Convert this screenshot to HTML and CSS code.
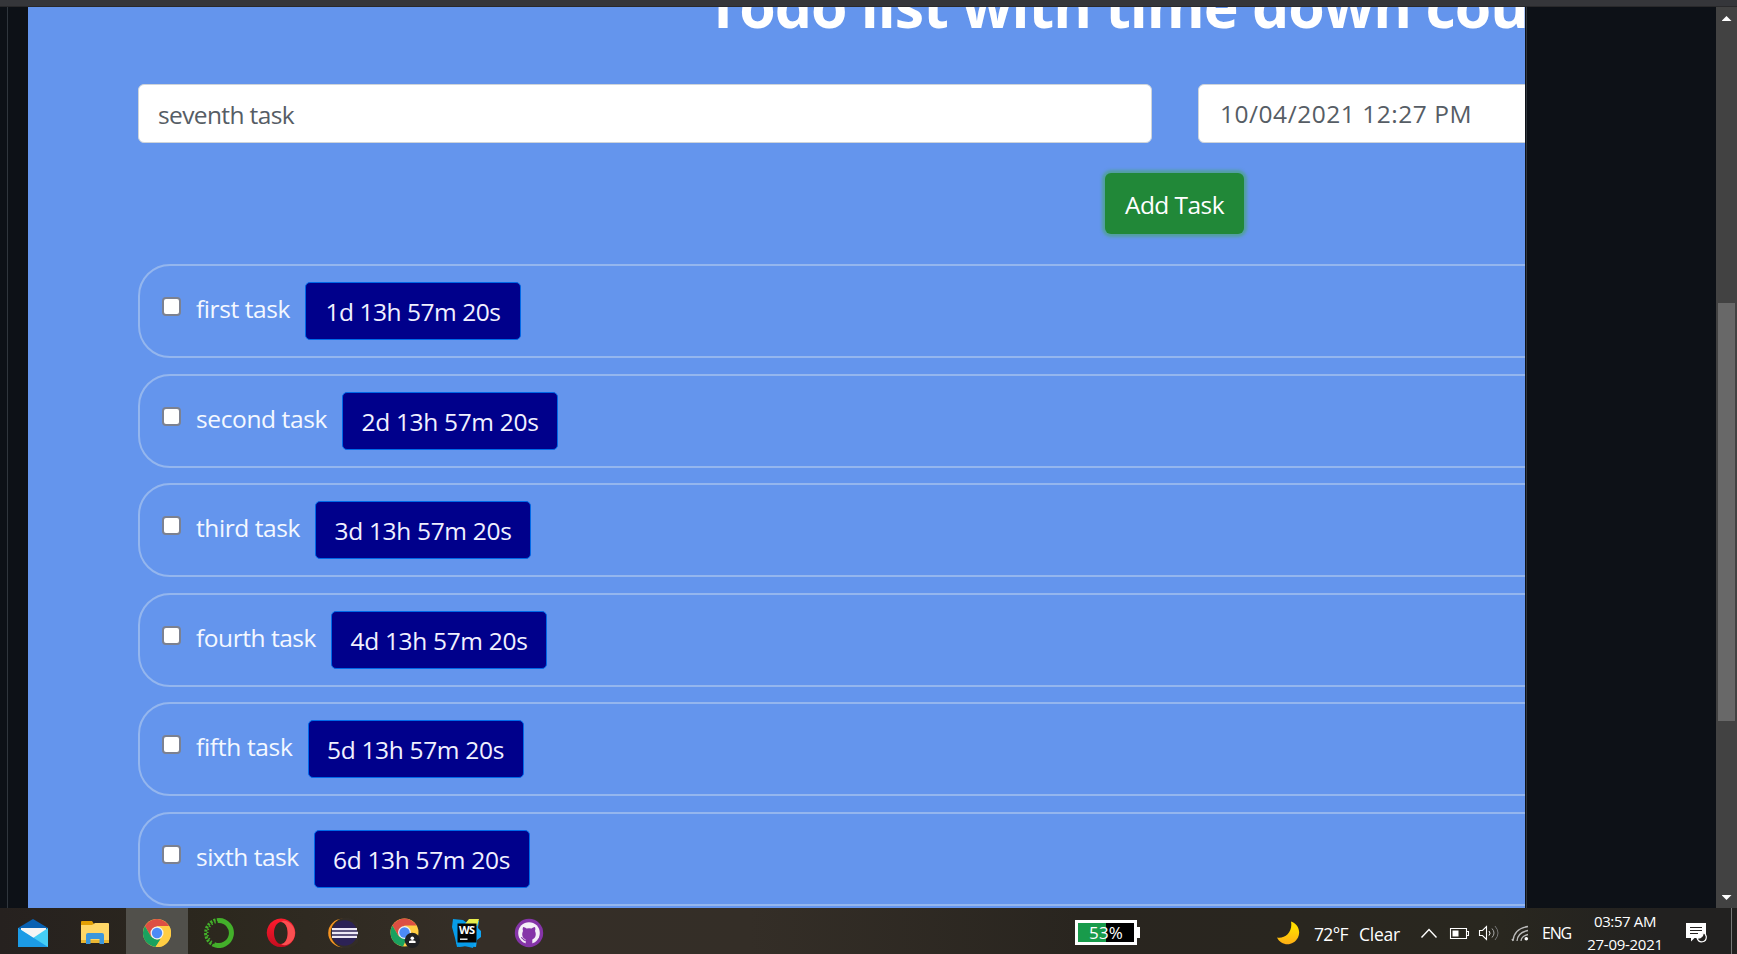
FILE: index.html
```html
<!DOCTYPE html>
<html lang="en">
<head>
<meta charset="utf-8">
<title>Todo list</title>
<link rel="stylesheet" href="styles.css">
</head>
<body>
<div class="browser-edge"></div>
<main class="viewport">
  <div class="gutter"></div>
  <section class="todo">
    <h1 class="title"><span data-fit="822">Todo list with time down cou</span></h1>
    <div class="inputs">
      <div class="field name"><span data-fit="136">seventh task</span></div>
      <div class="field date"><span data-fit="252">10/04/2021 12:27 PM</span></div>
    </div>
    <button class="add"><span data-fit="99">Add Task</span></button>
    <ul class="tasks">
      <li class="task"><i class="check"></i><span class="label" data-fit="94">first task</span><span class="timer"><span data-fit="175">1d 13h 57m 20s</span></span></li>
      <li class="task"><i class="check"></i><span class="label" data-fit="131">second task</span><span class="timer"><span data-fit="177">2d 13h 57m 20s</span></span></li>
      <li class="task"><i class="check"></i><span class="label" data-fit="104">third task</span><span class="timer"><span data-fit="177">3d 13h 57m 20s</span></span></li>
      <li class="task"><i class="check"></i><span class="label" data-fit="120">fourth task</span><span class="timer"><span data-fit="177">4d 13h 57m 20s</span></span></li>
      <li class="task"><i class="check"></i><span class="label" data-fit="96.5">fifth task</span><span class="timer"><span data-fit="177">5d 13h 57m 20s</span></span></li>
      <li class="task"><i class="check"></i><span class="label" data-fit="102.5">sixth task</span><span class="timer"><span data-fit="177">6d 13h 57m 20s</span></span></li>
    </ul>
  </section>
  <div class="side"></div>
  <div class="scrollbar"><i class="arrow up"></i><i class="thumb"></i><i class="arrow down"></i></div>
</main>
<footer class="taskbar">
  <div class="apps">
    <div class="app"><svg width="30" height="30" viewBox="0 0 30 30"><path d="M0 10 15 1 30 10V20H0Z" fill="#0861b3"/><path d="M3 10H28V20H3Z" fill="#f5f5f5"/><path d="M0 10 15 20 30 10V29H0Z" fill="#45cdf5"/><path d="M0 10 30 29H0Z" fill="#1c9be6"/></svg></div>
    <div class="app"><svg width="30" height="30" viewBox="0 0 30 30"><path d="M1 4a1 1 0 0 1 1-1h10l2 3-2 2H1Z" fill="#e2a004"/><path d="M1 7h11l3-2h13a1 1 0 0 1 1 1v19H1Z" fill="#ffd767"/><path d="M1 22h28v3H1Z" fill="#eab632"/><path d="M6 26V17q0-2 2-2h14q2 0 2 2v9h-4.500v-5h-9v5Z" fill="#3b97dd"/></svg></div>
    <div class="app active"><svg width="28" height="28" viewBox="0 0 28 28"><circle cx="14" cy="14" r="14" fill="#ffcd43"/><path d="M1.900 7A14 14 0 0 1 26.100 7H14L8 17.500Z" fill="#dd4f43"/><path d="M1.900 7 8 17.500 14 20.500 18 20 12.500 28A14 14 0 0 1 1.900 7Z" fill="#1aa15f"/><path d="M14 7H26.100A14 14 0 0 1 12.500 28L19.500 17Z" fill="#ffcd43"/><circle cx="14" cy="14" r="6.500" fill="#f1f1f1"/><circle cx="14" cy="14" r="5.200" fill="#4c8bf5"/></svg></div>
    <div class="app"><svg width="30" height="30" viewBox="0 0 30 30" fill="none"><path d="M15 2.500A12.500 12.500 0 1 1 10 26.500" stroke="#43b02a" stroke-width="5"/><path d="M15 1.500A13.500 13.500 0 0 0 10 27.500" stroke="#43b02a" stroke-width="3" stroke-dasharray="2.200 1.300"/><path d="M15 4A11 11 0 0 0 9 24.500" stroke="#43b02a" stroke-width="2" stroke-dasharray="1.300 2"/></svg></div>
    <div class="app"><svg width="30" height="30" viewBox="0 0 30 30"><defs><linearGradient id="op" x1="0" x2="0" y1="0" y2="1"><stop offset="0" stop-color="#ff1b2d"/><stop offset="1" stop-color="#c40d1f"/></linearGradient></defs><path fill="url(#op)" fill-rule="evenodd" d="M15 .5a14.300 14.300 0 1 0 .1 0ZM15 4c4 0 6.700 5 6.700 11S19 26 15 26 8 21 8 15 11 4 15 4Z"/><path d="M15 4C19 0 29 6 29 15S20 30 15 26C24 26 24 4 15 4Z" fill="#fa4f51"/></svg></div>
    <div class="app"><svg width="30" height="30" viewBox="0 0 30 30"><circle cx="14.500" cy="15" r="14.300" fill="#f79421"/><circle cx="18" cy="15" r="15.300" fill="#332d26"/><circle cx="16.500" cy="15" r="12.800" fill="#2c2255"/><path d="M4 11.200h25M4 15h26M4 18.800h25" stroke="#eee9f5" stroke-width="2.300"/></svg></div>
    <div class="app"><svg width="30" height="30" viewBox="0 0 30 30"><circle cx="14.500" cy="14.500" r="14" fill="#ffcd43"/><path d="M2.400 7.500A14 14 0 0 1 26.600 7.500H14.500L8.500 18Z" fill="#dd4f43"/><path d="M2.400 7.500 8.500 18l8 3L13 28.500A14 14 0 0 1 2.400 7.500Z" fill="#1aa15f"/><circle cx="14.500" cy="14.500" r="6.500" fill="#f1f1f1"/><circle cx="14.500" cy="14.500" r="5.200" fill="#4c8bf5"/><circle cx="22.300" cy="22.300" r="7.600" fill="#202124"/><circle cx="22.300" cy="20.300" r="1.800" fill="#fff"/><path d="M19 25v-1.300q0-1.500 3.300-1.500t3.300 1.500V25Z" fill="#fff"/></svg></div>
    <div class="app"><svg width="30" height="30" viewBox="0 0 30 30"><path d="M1 1 11 2 15 5V28L5 29 3 20 0 9Z" fill="#079ce9"/><path d="M13 5 19 1 27 3 26 10 29 13V19L25 22 24 29 12 28Z" fill="#10a5f4"/><path d="M13 6 17 1 27 1 25 8Z" fill="#e8ee4c"/><path d="M4 25h18l-1 5-8-2-6 1Z" fill="#079ce9"/><rect x="5.500" y="5.500" width="19" height="19" fill="#050505"/><text class="ws" x="7" y="15.500" textLength="16">WS</text><path d="M8 21.200h7.500" stroke="#fff" stroke-width="1.400"/></svg></div>
    <div class="app"><svg width="30" height="30" viewBox="0 0 30 30"><circle cx="15" cy="15" r="14.200" fill="#8534a8"/><circle cx="15" cy="15" r="10.800" fill="#f4eff7"/><path d="M11.700 26v-4.500C8 20 7.500 16 9 13q-.8-2 .1-4 2 0 3.500 1.500 2.500-.7 4.900 0Q19 9 21 9q.8 2 0 4c1.500 3 1 7-2.700 8.500V26Z" fill="#8534a8"/><path d="M7 19.500q1.500.3 2.300 1.800t2.500 1" fill="none" stroke="#8534a8" stroke-width="1.100"/></svg></div>
  </div>
  <div class="meter"><div class="cell"><span data-fit="34">53%</span></div><i class="nub"></i></div>
  <div class="tray">
    <svg class="moon" width="23" height="24" viewBox="0 0 23 24"><defs><linearGradient id="mn" x1="0" x2="0" y1="0" y2="1"><stop offset=".3" stop-color="#ffdb00"/><stop offset="1" stop-color="#ffae16"/></linearGradient></defs><path d="M14 .5C21 3 24 10 21 16.500 16 26 4 25 0 16.500 8 18 16 11 14 .5Z" fill="url(#mn)"/></svg>
    <span class="temp" data-fit="34">72°F</span>
    <span class="sky" data-fit="41">Clear</span>
    <svg class="icons" width="110" height="20" viewBox="0 0 110 20" fill="none" stroke="#fff"><path d="m1.500 13.500 7.500-8 7.500 8" stroke-width="1.400"/><path d="M30.500 4.500h16v10h-16Z M46.500 7.500h2v4h-2" stroke-width="1.100"/><path d="M32.500 6.500h6v6h-6Z" fill="#fff" stroke="none"/><path d="M59.500 6.500h3l4-4v13l-4-4h-3Z" stroke-width="1.100"/><path d="M69 7q2 2.200 0 4.500"/><path d="M72 4.500q4 4.500 0 9" stroke="#aaa"/><path d="M75 2q6 7 0 14" stroke="#777"/><path d="M93 17Q94 4.500 108 2.500M97 17Q97.500 8.500 108 6.500M101 17Q101.500 12 108 10.500M92 15l1 2" stroke="#bbb" stroke-width="1.300"/><circle cx="106.300" cy="14.800" r="1.800" fill="#fff" stroke="none"/></svg>
    <span class="lang" data-fit="29">ENG</span>
    <div class="clock"><span data-fit="62">03:57 AM</span><span data-fit="75.5">27-09-2021</span></div>
    <svg class="notice" width="22" height="22" viewBox="0 0 22 22"><path d="M1 1h20v15H9.500L6 19.500V16H1Z" fill="#fff"/><path d="M5 5.500h12M5 8.500h12M5 11.500h8" stroke="#242220" stroke-width="1.200"/><path d="M17.500 10c1.500 3-1 6.500-5.500 6 2 6 9.500 4.500 9.300-1.300Q20.500 11 17.500 10Z" fill="#242220" stroke="#fff" stroke-width="1.200"/></svg>
    <i class="desktop"></i>
  </div>
</footer>
<script src="fit.js"></script>
</body>
</html>
```

FILE: styles.css
```css
* { box-sizing: border-box; }
body { margin: 0; width: 1737px; height: 954px; overflow: hidden; display: flex; flex-direction: column; background: #0d1117; font-family: "Open Sans", "Noto Sans", sans-serif; }
[data-fit] { display: inline-block; white-space: nowrap; }
.browser-edge { height: 7px; flex: none; background: #35363a; border-bottom: 1px solid #29292b; }
.viewport { height: 901px; flex: none; display: flex; overflow: hidden; }
.gutter { width: 28px; flex: none; background: linear-gradient(90deg, transparent 7px, #30363d 7px, #30363d 8px, transparent 8px); }
.todo { width: 1497px; flex: none; overflow: hidden; background: #6495ed; padding-left: 110px; }
.title { display: flex; align-items: flex-start; height: 77px; margin: 0 0 0 568px; color: #fff; font-size: 59px; line-height: 84px; font-weight: 700; white-space: nowrap; }
.title span { flex: none; margin-top: -44px; }
.inputs { display: flex; gap: 46px; width: 1500px; }
.field { height: 59px; flex: none; background: #fff; border: 1px solid #ced4da; border-radius: 6px; color: #565d65; font-size: 24.5px; line-height: 60px; padding-left: 19px; }
.field.name { width: 1014px; }
.field.date { width: 480px; padding-left: 21px; line-height: 58px; }
.add { display: block; margin: 30px 0 0 967px; width: 139px; height: 61px; padding: 0; border: 0; border-radius: 6px; background: #218838; box-shadow: 0 0 3px 3px rgba(72, 165, 120, .65); color: #fff; font: 500 24.5px/63px "Open Sans", sans-serif; }
.tasks { list-style: none; margin: 30px 0 0; padding: 0; display: flex; flex-direction: column; gap: 15.5px; width: 1600px; }
.task { height: 94px; flex: none; display: flex; align-items: flex-start; border: 2px solid #94b6ee; border-radius: 32px; padding: 16px 0 0 22px; color: #f4f8ff; font-size: 24.5px; font-weight: 500; }
.check { width: 19px; height: 19px; margin-top: 15px; flex: none; border: 2px solid #7c8190; border-radius: 4px; background: #fff; }
.label { margin: 9px 15px 0 15px; line-height: 35px; }
.timer { width: 216px; height: 58px; border: 1px solid #0069e8; border-radius: 5px; background: #00008b; text-align: center; line-height: 58px; color: #f0f0ff; }
.side { width: 191px; flex: none; border-left: 1px solid #0d1117; box-shadow: inset 1px 0 #30363d; }
.scrollbar { width: 21px; flex: none; background: #424242; display: flex; flex-direction: column; align-items: center; padding: 9px 0 8px; }
.arrow { width: 10px; height: 5px; background: #fff; }
.up { clip-path: polygon(50% 0, 100% 100%, 0 100%); }
.down { clip-path: polygon(0 0, 100% 0, 50% 100%); margin-top: auto; }
.thumb { width: 17px; height: 418px; background: #686868; margin-top: 282px; }
.taskbar { height: 46px; flex: none; display: flex; align-items: flex-start; background: linear-gradient(90deg, #26211f, #2c281e 220px, #352e27 480px, #342e27 750px, #29251f 1080px, #29271f 1500px, #222120 1660px); color: #fff; }
.apps { display: flex; padding-left: 2px; width: 1075px; }
.app { width: 62px; height: 46px; flex: none; display: flex; align-items: center; justify-content: center; padding-top: 4px; }
.app.active { background: #51504b; }
.ws { font: 700 11px "Open Sans", sans-serif; fill: #fff; }
.meter { width: 65px; height: 25px; margin-top: 12px; display: flex; align-items: center; }
.cell { width: 62px; height: 25px; border: 3px solid #fff; background: linear-gradient(90deg, #189b4b 50%, #000 50%); font-size: 17px; line-height: 20px; text-align: center; }
.nub { width: 3px; height: 11px; background: #fff; }
.tray { display: flex; height: 46px; flex: 1; padding-left: 137px; font-size: 17.5px; line-height: 24px; }
.tray > * { flex: none; }
.moon { margin-top: 13px; }
.temp { margin: 14px 0 0 14px; }
.sky { margin: 14px 0 0 11px; }
.icons { margin: 16px 0 0 20px; }
.lang { margin: 14px 0 0 12px; font-size: 16px; line-height: 22px; }
.clock { width: 78px; margin: 2px 0 0 15px; display: flex; flex-direction: column; align-items: center; font-size: 15px; line-height: 23px; }
.notice { margin: 14px 0 0 21px; }
.desktop { width: 1px; height: 46px; margin-left: auto; margin-right: 5px; background: #777; }
```

FILE: fit.js
```javascript
// Track each label so that its text fills the width given in data-fit.
document.querySelectorAll('[data-fit]').forEach(function (el) {
  var target = Number(el.dataset.fit);
  var natural = el.getBoundingClientRect().width;
  var gap = (target - natural) / el.textContent.length;
  el.style.letterSpacing = gap + 'px';
});
```
